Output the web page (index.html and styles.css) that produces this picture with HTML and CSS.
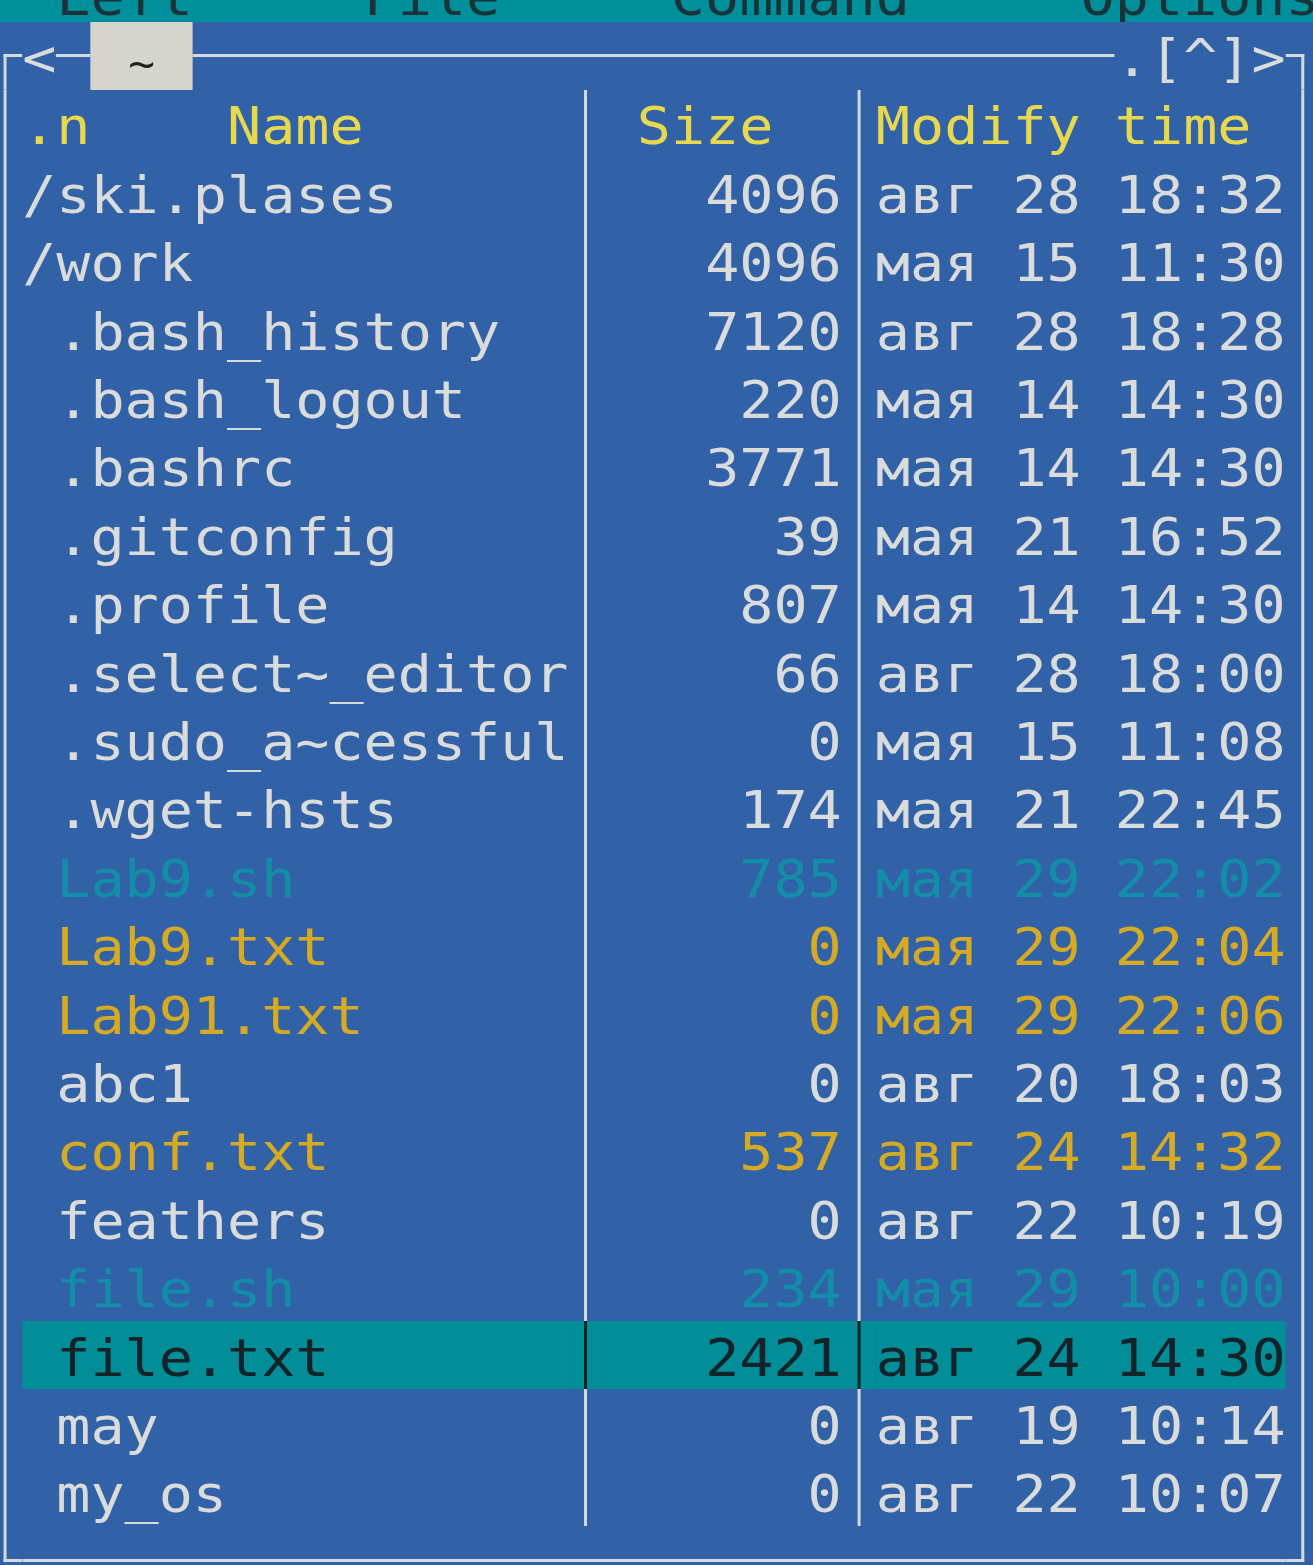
FILE: index.html
```html
<!DOCTYPE html>
<html lang="ru">
<head>
<meta charset="utf-8">
<title>mc</title>
<link rel="stylesheet" href="styles.css">
</head>
<body>
<div class="screen">
  <div class="menubar">  Left     File     Command     Options</div>

  <div class="row">
    <span class="c tl"></span><span class="c t">&lt;</span><span class="c h"></span><span class="t path"> ~ </span><span class="h fill"></span><span class="t hist">.[^]&gt;</span><span class="c tr"></span>
  </div>

  <div class="row yel">
    <span class="c v"></span><span class="t name">.n    Name</span><span class="c v sep"></span><span class="t size left"> Size</span><span class="c v sep"></span><span class="t time">Modify time</span><span class="c v"></span>
  </div>

  <div class="row">
    <span class="c v"></span><span class="t name">/ski.plases</span><span class="c v sep"></span><span class="t size">4096</span><span class="c v sep"></span><span class="t time">авг 28 18:32</span><span class="c v"></span>
  </div>
  <div class="row">
    <span class="c v"></span><span class="t name">/work</span><span class="c v sep"></span><span class="t size">4096</span><span class="c v sep"></span><span class="t time">мая 15 11:30</span><span class="c v"></span>
  </div>
  <div class="row">
    <span class="c v"></span><span class="t name"> .bash_history</span><span class="c v sep"></span><span class="t size">7120</span><span class="c v sep"></span><span class="t time">авг 28 18:28</span><span class="c v"></span>
  </div>
  <div class="row">
    <span class="c v"></span><span class="t name"> .bash_logout</span><span class="c v sep"></span><span class="t size">220</span><span class="c v sep"></span><span class="t time">мая 14 14:30</span><span class="c v"></span>
  </div>
  <div class="row">
    <span class="c v"></span><span class="t name"> .bashrc</span><span class="c v sep"></span><span class="t size">3771</span><span class="c v sep"></span><span class="t time">мая 14 14:30</span><span class="c v"></span>
  </div>
  <div class="row">
    <span class="c v"></span><span class="t name"> .gitconfig</span><span class="c v sep"></span><span class="t size">39</span><span class="c v sep"></span><span class="t time">мая 21 16:52</span><span class="c v"></span>
  </div>
  <div class="row">
    <span class="c v"></span><span class="t name"> .profile</span><span class="c v sep"></span><span class="t size">807</span><span class="c v sep"></span><span class="t time">мая 14 14:30</span><span class="c v"></span>
  </div>
  <div class="row">
    <span class="c v"></span><span class="t name"> .select~_editor</span><span class="c v sep"></span><span class="t size">66</span><span class="c v sep"></span><span class="t time">авг 28 18:00</span><span class="c v"></span>
  </div>
  <div class="row">
    <span class="c v"></span><span class="t name"> .sudo_a~cessful</span><span class="c v sep"></span><span class="t size">0</span><span class="c v sep"></span><span class="t time">мая 15 11:08</span><span class="c v"></span>
  </div>
  <div class="row">
    <span class="c v"></span><span class="t name"> .wget-hsts</span><span class="c v sep"></span><span class="t size">174</span><span class="c v sep"></span><span class="t time">мая 21 22:45</span><span class="c v"></span>
  </div>
  <div class="row dim">
    <span class="c v"></span><span class="t name"> Lab9.sh</span><span class="c v sep"></span><span class="t size">785</span><span class="c v sep"></span><span class="t time">мая 29 22:02</span><span class="c v"></span>
  </div>
  <div class="row gold">
    <span class="c v"></span><span class="t name"> Lab9.txt</span><span class="c v sep"></span><span class="t size">0</span><span class="c v sep"></span><span class="t time">мая 29 22:04</span><span class="c v"></span>
  </div>
  <div class="row gold">
    <span class="c v"></span><span class="t name"> Lab91.txt</span><span class="c v sep"></span><span class="t size">0</span><span class="c v sep"></span><span class="t time">мая 29 22:06</span><span class="c v"></span>
  </div>
  <div class="row">
    <span class="c v"></span><span class="t name"> abc1</span><span class="c v sep"></span><span class="t size">0</span><span class="c v sep"></span><span class="t time">авг 20 18:03</span><span class="c v"></span>
  </div>
  <div class="row gold">
    <span class="c v"></span><span class="t name"> conf.txt</span><span class="c v sep"></span><span class="t size">537</span><span class="c v sep"></span><span class="t time">авг 24 14:32</span><span class="c v"></span>
  </div>
  <div class="row">
    <span class="c v"></span><span class="t name"> feathers</span><span class="c v sep"></span><span class="t size">0</span><span class="c v sep"></span><span class="t time">авг 22 10:19</span><span class="c v"></span>
  </div>
  <div class="row dim">
    <span class="c v"></span><span class="t name"> file.sh</span><span class="c v sep"></span><span class="t size">234</span><span class="c v sep"></span><span class="t time">мая 29 10:00</span><span class="c v"></span>
  </div>
  <div class="row sel">
    <span class="c v"></span><span class="t name"> file.txt</span><span class="c v sep"></span><span class="t size">2421</span><span class="c v sep"></span><span class="t time">авг 24 14:30</span><span class="c v"></span>
  </div>
  <div class="row">
    <span class="c v"></span><span class="t name"> may</span><span class="c v sep"></span><span class="t size">0</span><span class="c v sep"></span><span class="t time">авг 19 10:14</span><span class="c v"></span>
  </div>
  <div class="row">
    <span class="c v"></span><span class="t name"> my_os</span><span class="c v sep"></span><span class="t size">0</span><span class="c v sep"></span><span class="t time">авг 22 10:07</span><span class="c v"></span>
  </div>

  <div class="row">
    <span class="c bl"></span><span class="h bfill"></span><span class="c br"></span>
  </div>
</div>
</body>
</html>
```

FILE: styles.css
```css
:root {
  /* terminal cell: 34.15px on screen = 30.71px of DejaVu Sans Mono advance, stretched 1.112x */
  --cw: 30.71px;
  --rh: 68.4px;
  --ln: #d3dae0;
  --bg: #3162a7;
  --teal: #018e99;
}

html, body {
  margin: 0;
  padding: 0;
}

body {
  background: var(--bg);
  width: 1313px;
  height: 1565px;
  overflow: hidden;
}

.screen {
  margin: -46.8px 0 0 -12px;
  width: calc(var(--cw) * 39);
  font-family: "DejaVu Sans Mono", monospace;
  font-size: 51px;
  letter-spacing: 0;
  color: #d9dcda;
  transform: scaleX(1.112);
  transform-origin: 0 0;
}

.menubar {
  height: var(--rh);
  box-sizing: border-box;
  padding-top: 22px;
  line-height: 45.8px;
  background: #00909b;
  color: #1a3338;
  overflow: hidden;
  white-space: pre;
}

.row {
  display: flex;
  height: var(--rh);
}

.row > * {
  flex: none;
  height: 100%;
  box-sizing: border-box;
}

.c {
  width: var(--cw);
}

.t {
  padding-top: 7.5px;
  line-height: 60.4px;
  overflow: hidden;
  white-space: pre;
}

.name {
  width: calc(var(--cw) * 16);
}

.size {
  width: calc(var(--cw) * 7);
  text-align: right;
}

.size.left {
  text-align: left;
}

.time {
  width: calc(var(--cw) * 12);
}

.path {
  width: calc(var(--cw) * 3);
  background: #d5d5ce;
  color: #1f2020;
  text-align: center;
  font-size: 40px;
  padding-top: 12px;
}

.fill {
  width: calc(var(--cw) * 27);
}

.bfill {
  width: calc(var(--cw) * 37);
}

.hist {
  width: calc(var(--cw) * 5);
}

/* line drawing */
.v {
  background: linear-gradient(var(--ln), var(--ln)) 14px 0 / 2.7px 100% no-repeat;
}

.h {
  background: linear-gradient(var(--ln), var(--ln)) 0 32.7px / 100% 3px no-repeat;
}

.tl {
  background:
    linear-gradient(var(--ln), var(--ln)) 14px 32.7px / 16.71px 3px no-repeat,
    linear-gradient(var(--ln), var(--ln)) 14px 32.7px / 2.7px 35.7px no-repeat;
}

.tr {
  background:
    linear-gradient(var(--ln), var(--ln)) 0 32.7px / 16.7px 3px no-repeat,
    linear-gradient(var(--ln), var(--ln)) 14px 32.7px / 2.7px 35.7px no-repeat;
}

.bl {
  background:
    linear-gradient(var(--ln), var(--ln)) 14px 32.7px / 16.71px 3px no-repeat,
    linear-gradient(var(--ln), var(--ln)) 14px 0 / 2.7px 35.7px no-repeat;
}

.br {
  background:
    linear-gradient(var(--ln), var(--ln)) 0 32.7px / 16.7px 3px no-repeat,
    linear-gradient(var(--ln), var(--ln)) 14px 0 / 2.7px 35.7px no-repeat;
}

/* colours */
.yel .t {
  color: #e8d84e;
}

.gold .t {
  color: #d6aa22;
}

.dim .t {
  color: #138ea8;
}

.sel .name,
.sel .size,
.sel .time,
.sel .sep {
  background-color: var(--teal);
  color: #14222a;
}

.sel .sep {
  --ln: #13202a;
}
```
